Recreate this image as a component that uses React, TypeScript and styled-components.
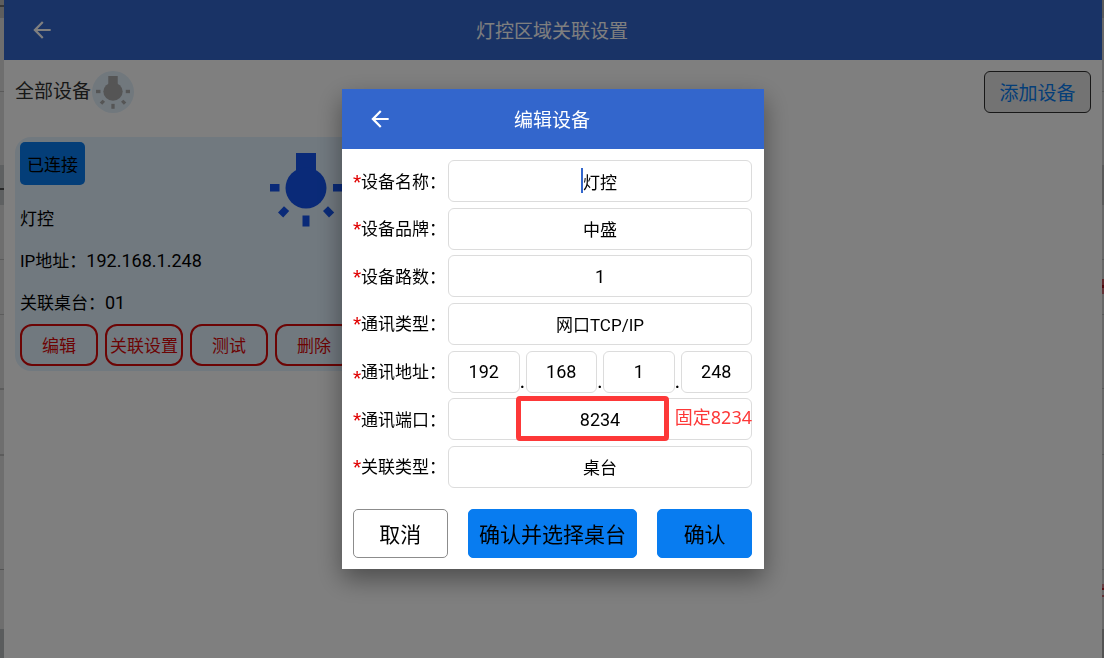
import React from "react";
import styled, { createGlobalStyle } from "styled-components";
import { MdArrowBack } from "react-icons/md";

const GlobalStyle = createGlobalStyle`
  *, *::before, *::after { box-sizing: border-box; }
  body {
    margin: 0;
    background: #dcdcdc;
    color: #000;
    font-family: Roboto, "Noto Sans CJK SC", sans-serif;
    font-size: 17px;
  }
  button, input { font: inherit; color: inherit; }
  button { cursor: pointer; }
`;

const Shell = styled.div`
  display: grid;
  grid-template-columns: 4px minmax(0, 1fr) 2px;
  min-height: 100vh;
`;

const LeftEdge = styled.div`
  background: linear-gradient(
    #bcbcbc 0 5px, #707070 5px 7px, #bcbcbc 7px 18px, #dcdcdc 18px 91px, #b4b4b4 91px 92px,
    #dcdcdc 92px 165px, #bcc0c2 165px 188px, #505050 188px 190px, #bcc0c2 190px 205px,
    #dcdcdc 205px 259px, #b8b8b8 259px 260px, #dcdcdc 260px 314px, #b8b8b8 314px 315px,
    #dcdcdc 315px 388px, #b8b8b8 388px 390px, #dcdcdc 390px 454px, #b8b8b8 454px 456px,
    #dcdcdc 456px 569px, #a8a8a8 569px 570px, #dcdcdc 570px 629px, #b4b8ba 629px
  );
`;

const RightEdge = styled.div`
  background: linear-gradient(
    #b4b4b4 0 18px, #d0d0d0 18px 91px, #b0b0b0 91px 92px, #d0d0d0 92px 165px, #b4b4b4 165px 205px,
    #d0d0d0 205px 259px, #b0b0b0 259px 260px, #d0d0d0 260px 279px, #c05058 279px 285px,
    #a01018 285px 288px, #c86870 288px 294px, #d0d0d0 294px 314px, #b0b0b0 314px 315px,
    #d0d0d0 315px 388px, #b0b0b0 388px 389px, #d0d0d0 389px 454px, #b0b0b0 454px 455px,
    #d0d0d0 455px 569px, #b0b0b0 569px 570px, #d0d0d0 570px 584px, #d08088 584px 588px,
    #b02028 588px 590px, #d0d0d0 590px 595px, #c06068 595px 597px, #d0d0d0 597px 629px, #a8a8a8 629px
  );
`;

const Page = styled.main`
  background: #fff;
`;

const TitleBar = styled.header`
  display: grid;
  grid-template-columns: 80px minmax(0, 1fr) 82px;
  align-items: center;
  height: 60px;
  background: #3366cc;
  color: #fff;
`;

const BackButton = styled.button`
  display: grid;
  place-items: center;
  width: 60px;
  height: 60px;
  margin-left: 8px;
  padding: 0;
  border: 0;
  background: none;
  font-size: 26px;
`;

const Title = styled.h1`
  margin: 0;
  padding-bottom: 2px;
  font-size: 19px;
  font-weight: 400;
  text-align: center;
`;

const Toolbar = styled.div`
  display: flex;
  align-items: center;
  justify-content: space-between;
  padding: 11px 11px 0;
`;

const Filter = styled.div`
  display: flex;
  align-items: center;
  gap: 1px;
  font-size: 19px;
  line-height: 40px;
  color: #303030;
`;

const LampBadge = styled.span`
  display: grid;
  place-items: center;
  width: 42px;
  height: 42px;
  border-radius: 50%;
  background: #e2f0fb;
`;

const AddButton = styled.button`
  width: 107px;
  height: 42px;
  padding: 0 0 2px;
  border: 1px solid #303030;
  border-radius: 6px;
  background: #e6e6e6;
  color: #087cf0;
  font-size: 19px;
`;

const Card = styled.article`
  width: 344px;
  margin: 24px 0 0 11px;
  padding: 5px 6px 5px 5px;
  border-radius: 16px;
  background: #e3f2ff;
`;

const CardTop = styled.div`
  display: flex;
  justify-content: space-between;
`;

const Status = styled.span`
  display: grid;
  place-items: center;
  width: 65px;
  height: 43px;
  border-radius: 5px;
  background: #087cf0;
`;

const CardInfo = styled.div`
  flex: 1;
`;

const Line = styled.p`
  margin: 0;
  line-height: 42px;
`;

const FirstLine = styled(Line)`
  margin-top: 13px;
`;

const Digits = styled.span`
  font-size: 18px;
`;

const LampSlot = styled.div`
  padding: 11px 11px 0 0;
`;

const CardActions = styled.div`
  display: grid;
  grid-template-columns: repeat(4, 1fr);
  gap: 7px;
`;

const OutlineButton = styled.button`
  height: 42px;
  padding: 0 0 2px;
  border: 2px solid #d80808;
  border-radius: 12px;
  background: none;
  color: #d80808;
  white-space: nowrap;
  display: flex;
  align-items: center;
  justify-content: center;
`;

const Backdrop = styled.div`
  position: fixed;
  inset: 0;
  display: grid;
  place-items: center;
  padding: 0 2px 0 4px;
  background: rgba(0, 0, 0, 0.5);
`;

const Dialog = styled.section`
  width: min(422px, 100%);
  background: #fff;
  box-shadow: 0 10px 24px rgba(0, 0, 0, 0.4);
`;

const Form = styled.form`
  padding: 11px 12px 11px 11px;
`;

const Fields = styled.div`
  display: flex;
  flex-direction: column;
  justify-content: space-between;
  min-height: 328px;
`;

const Row = styled.div`
  display: grid;
  grid-template-columns: 95px minmax(0, 1fr);
  align-items: center;
`;

const Label = styled.label`
  display: flex;
  padding-bottom: 2px;
  white-space: nowrap;
`;

const Required = styled.span<{ $low?: boolean }>`
  width: 8px;
  padding-top: ${(p) => (p.$low ? "8px" : "2px")};
  margin-bottom: -8px;
  color: #e00000;
  font-size: 19px;
`;

const Control = styled.div`
  position: relative;
  display: flex;
`;

const Input = styled.input<{ $numeric?: boolean }>`
  flex: 1;
  min-width: 0;
  width: 100%;
  height: 42px;
  padding: 0;
  border: 1px solid #dcdcdc;
  border-radius: 6px;
  background: #fff;
  font-size: ${(p) => (p.$numeric ? "18px" : "17px")};
  text-align: center;
  outline: none;
`;

const Dot = styled.span`
  align-self: flex-end;
  width: 6px;
  font-size: 22px;
  line-height: 24px;
  text-align: center;
`;

const Caret = styled.span`
  position: absolute;
  top: 8px;
  left: calc(50% - 19px);
  width: 2px;
  height: 25px;
  background: #3366cc;
`;

const Highlight = styled.span`
  position: absolute;
  top: -2px;
  left: 68px;
  width: 153px;
  height: 45px;
  border: 5px solid #fd3838;
  border-radius: 4px;
  pointer-events: none;
`;

const Note = styled.span`
  position: absolute;
  top: 7px;
  right: 0;
  color: #fd3838;
  font-family: "Noto Sans", "Noto Sans CJK SC", sans-serif;
  font-size: 18px;
  line-height: 25px;
`;

const Footer = styled.footer`
  display: grid;
  grid-template-columns: 95fr 170fr 95fr;
  gap: 20px;
  margin-top: 21px;
`;

const ActionButton = styled.button<{ $primary?: boolean }>`
  height: 49px;
  padding: 0 0 2px;
  border: 1px solid ${(p) => (p.$primary ? "#087cf0" : "#8c8c8c")};
  border-radius: 5px;
  background: ${(p) => (p.$primary ? "#087cf0" : "#fff")};
  font-size: 21px;
  white-space: nowrap;
`;

function Lamp({ width, height, color }: { width: number; height: number; color: string }) {
  return (
    <svg width={width} height={height} viewBox="0 0 72 74" fill={color} preserveAspectRatio="none" aria-hidden="true">
      <rect x="26" y="0" width="20" height="24" />
      <circle cx="36" cy="35" r="20.5" />
      <rect x="0" y="31" width="9.5" height="7.5" />
      <rect x="63" y="31" width="9.5" height="7.5" />
      <rect x="32.5" y="62.5" width="7" height="11" />
      <path d="M14 53.2 19.2 58 13.2 64.5 8 59.5Z" />
      <path d="M58 53.2 64.2 59.5 59 64.5 53 58Z" />
    </svg>
  );
}

type Field = { id: string; label: string; value: string; numeric?: boolean };

const baseFields: Field[] = [
  { id: "name", label: "设备名称", value: "灯控" },
  { id: "brand", label: "设备品牌", value: "中盛" },
  { id: "channels", label: "设备路数", value: "1", numeric: true },
  { id: "protocol", label: "通讯类型", value: "网口TCP/IP" },
];

const address = ["192", "168", "1", "248"];

function FieldLabel({ id, text, low }: { id: string; text: string; low?: boolean }) {
  return (
    <Label htmlFor={id}>
      <Required $low={low}>*</Required>
      {text}：
    </Label>
  );
}

export default function App() {
  return (
    <>
      <GlobalStyle />
      <Shell>
        <LeftEdge />
        <Page>
          <TitleBar>
            <BackButton aria-label="返回"><MdArrowBack /></BackButton>
            <Title>灯控区域关联设置</Title>
          </TitleBar>
          <Toolbar>
            <Filter>
              全部设备
              <LampBadge><Lamp width={34} height={33} color="#aaaaaa" /></LampBadge>
            </Filter>
            <AddButton>添加设备</AddButton>
          </Toolbar>
          <Card>
            <CardTop>
              <CardInfo>
                <Status>已连接</Status>
                <FirstLine>灯控</FirstLine>
                <Line>IP地址：<Digits>192.168.1.248</Digits></Line>
                <Line>关联桌台：<Digits>01</Digits></Line>
              </CardInfo>
              <LampSlot><Lamp width={72} height={74} color="#1455f0" /></LampSlot>
            </CardTop>
            <CardActions>
              {["编辑", "关联设置", "测试", "删除"].map((text) => (
                <OutlineButton key={text}>{text}</OutlineButton>
              ))}
            </CardActions>
          </Card>
        </Page>
        <RightEdge />
      </Shell>

      <Backdrop>
        <Dialog role="dialog" aria-modal="true" aria-labelledby="dialog-title">
          <TitleBar>
            <BackButton aria-label="返回"><MdArrowBack /></BackButton>
            <Title as="h2" id="dialog-title">编辑设备</Title>
          </TitleBar>
          <Form onSubmit={(e) => e.preventDefault()}>
            <Fields>
              {baseFields.map((f) => (
                <Row key={f.id}>
                  <FieldLabel id={f.id} text={f.label} />
                  <Control>
                    <Input id={f.id} defaultValue={f.value} $numeric={f.numeric} />
                    {f.id === "name" && <Caret />}
                  </Control>
                </Row>
              ))}
              <Row>
                <FieldLabel id="ip-0" text="通讯地址" low />
                <Control>
                  {address.map((part, i) => (
                    <React.Fragment key={i}>
                      {i > 0 && <Dot>.</Dot>}
                      <Input id={`ip-${i}`} defaultValue={part} aria-label={`通讯地址 ${i + 1}`} $numeric />
                    </React.Fragment>
                  ))}
                </Control>
              </Row>
              <Row>
                <FieldLabel id="port" text="通讯端口" />
                <Control>
                  <Input id="port" defaultValue="8234" $numeric />
                  <Highlight />
                  <Note>固定8234</Note>
                </Control>
              </Row>
              <Row>
                <FieldLabel id="target" text="关联类型" />
                <Control><Input id="target" defaultValue="桌台" /></Control>
              </Row>
            </Fields>
            <Footer>
              <ActionButton type="button">取消</ActionButton>
              <ActionButton type="button" $primary>确认并选择桌台</ActionButton>
              <ActionButton type="submit" $primary>确认</ActionButton>
            </Footer>
          </Form>
        </Dialog>
      </Backdrop>
    </>
  );
}
